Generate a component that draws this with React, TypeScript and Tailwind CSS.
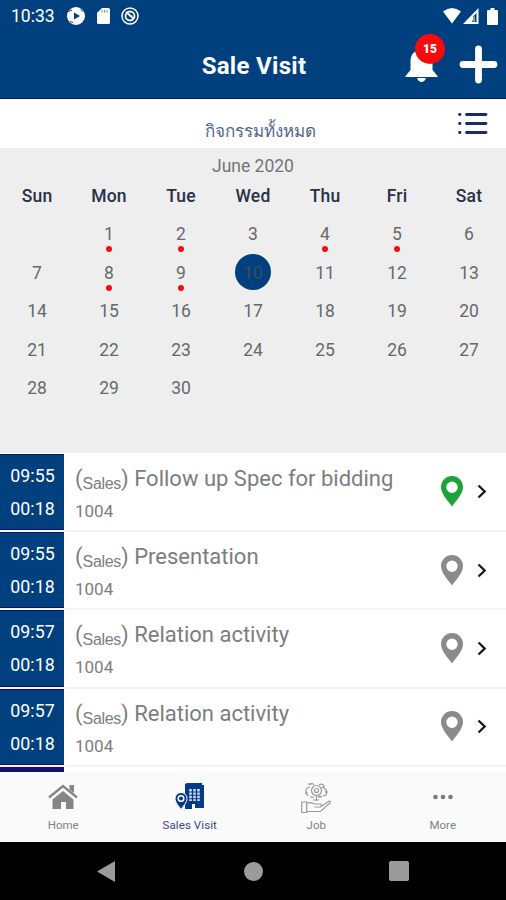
import React from 'react'

const weekdays = ['Sun', 'Mon', 'Tue', 'Wed', 'Thu', 'Fri', 'Sat']
const days = [0, ...Array.from({ length: 30 }, (_, i) => i + 1)]
const marked = [1, 2, 4, 5, 8, 9]
const today = 10

const visits = [
    { start: '09:55', end: '00:18', title: 'Follow up Spec for bidding', code: '1004', checkedIn: true },
    { start: '09:55', end: '00:18', title: 'Presentation', code: '1004', checkedIn: false },
    { start: '09:57', end: '00:18', title: 'Relation activity', code: '1004', checkedIn: false },
    { start: '09:57', end: '00:18', title: 'Relation activity', code: '1004', checkedIn: false },
]

function StatusBar() {
    return (
        <div className="h-8 flex items-center pl-[11px] pr-2 text-white">
            <span className="text-[17.500px] leading-8 w-[55px]">10:33</span>
            <svg className="w-5 h-5" viewBox="0 0 20 20">
                <circle cx="10" cy="10" r="9" fill="currentColor" />
                <path d="M8 6.5 14 10l-6 3.5z" fill="#00407f" />
                <path d="M2.5 5.5 6 4M4 15.500l3 1M15 3.500l1.500 2" stroke="#00407f" strokeWidth="1" />
            </svg>
            <svg className="w-[13px] h-4 ml-[11px]" viewBox="0 0 13 16">
                <path d="M5 0h6.500Q13 0 13 1.500v13q0 1.500-1.500 1.500h-10Q0 16 0 14.500V5z" fill="currentColor" />
                <path d="M5 2v2.500M7.500 2v2.500M10 2v2.500" stroke="#00407f" strokeWidth=".6" />
            </svg>
            <svg className="w-[18px] h-[18px] ml-[11px]" viewBox="0 0 18 18" fill="none" stroke="currentColor">
                <circle cx="9" cy="9" r="8" strokeWidth="1.500" />
                <circle cx="9" cy="9" r="4.500" strokeWidth="1.800" />
                <path d="m5 5 8 7M8 8.500l3 .5" strokeWidth="1.700" />
            </svg>
            <svg className="w-[18px] h-4 ml-auto" viewBox="0 0 18 16">
                <path d="M0 3.500Q9-3.500 18 3.500L9 15.500z" fill="currentColor" />
            </svg>
            <svg className="w-4 h-4 ml-[2px]" viewBox="0 0 16 16">
                <path d="M15.500 0v16H0z" fill="currentColor" />
                <path d="M13.500 5v9H8.500L10 12V8.500z" fill="#00407f" />
                <path d="M11 8.500V14" stroke="white" strokeWidth="1" />
            </svg>
            <svg className="w-[11px] h-[17px] ml-[8px]" viewBox="0 0 11 17">
                <path d="M3.500 0h4v2H10q1 0 1 1v13q0 1-1 1H1q-1 0-1-1V3q0-1 1-1h2.500z" fill="currentColor" />
            </svg>
        </div>
    )
}

function Header() {
    return (
        <header className="h-[99px] bg-[#00407f] border-b border-[#11106b]">
            <StatusBar />
            <div className="relative h-[66px]">
                <h1 className="text-center text-white font-bold text-2xl leading-[68px] tracking-[0.300px] pl-[2px]">Sale Visit</h1>
                <svg className="absolute left-[404px] top-[15px] w-[35px] h-[36px]" viewBox="0 0 34 36" fill="white">
                    <path d="M14 3a3 3 0 0 1 6 0c6 2 8 6 8 12v8l5 6v1H1v-1l5-6v-8C6 9 8 5 14 3zM12.500 31h9q-1.500 4-4.500 4t-4.500-4z" />
                </svg>
                <span className="absolute left-[415px] top-[2px] w-[30px] h-[30px] rounded-full bg-[#f90b0b] text-white text-xs font-black leading-[31px] text-center">15</span>
                <svg className="absolute left-[459px] top-[13px] w-[39px] h-[39px]" viewBox="0 0 39 39" fill="none" stroke="white" strokeWidth="6.800" strokeLinecap="round">
                    <path d="M19.500 4v31M4 19.500h31" />
                </svg>
            </div>
        </header>
    )
}

function Calendar() {
    return (
        <section className="h-[305px] bg-[#eee] px-px">
            <h2 className="h-[36px] text-center text-[17.500px] leading-[37px] text-[#707579]">June 2020</h2>
            <div className="grid grid-cols-7 text-center">
                {weekdays.map((name) => (
                    <div key={name} className="h-[31px] text-[17.500px] leading-[24px] tracking-[0.200px] font-medium text-[#28304a]">{name}</div>
                ))}
                {days.map((day) => (
                    <div key={day} className="relative h-[38.500px] flex justify-center">
                        {day > 0 && (
                            <span className={`w-9 h-9 rounded-full text-[17.500px] leading-[38px] ${day === today ? 'bg-[#00407f] text-[#3d4b60]' : 'text-[#66696d]'}`}>{day}</span>
                        )}
                        {marked.includes(day) && (
                            <span className="absolute left-1/2 -ml-[3px] top-[31px] w-[6px] h-[6px] rounded-full bg-[#fa0a12]" />
                        )}
                    </div>
                ))}
            </div>
        </section>
    )
}

function VisitRow({ visit }: { visit: (typeof visits)[number] }) {
    return (
        <li className="h-[78.300px] flex shrink-0 border-b-2 border-[#f3f3f4]">
            <div className="w-16 bg-[#00407f] border-y border-[#11106b] text-white text-[17.800px] leading-[33px] text-center pt-[4px] pl-px">
                <div>{visit.start}</div>
                <div>{visit.end}</div>
            </div>
            <div className="flex-1 pl-[11px] text-[#7b7d7f] whitespace-nowrap">
                <div className="h-[44px] pt-[8px] text-[22px] leading-[34px] text-[#7b7d7f]">
                    (<span className="relative top-[3px] text-[16px] font-[Liberation_Sans] tracking-[-0.300px]">Sales</span>) {visit.title}
                </div>
                <div className="text-[17px] leading-[26px]">{visit.code}</div>
            </div>
            <div className="w-[65px] flex items-center">
                <svg className={`w-[22px] h-[31px] ${visit.checkedIn ? 'text-[#20a23b]' : 'text-[#8b8b8b]'}`} viewBox="0 0 22 31">
                    <path d="M11 0A11 11 0 0 0 0 11c0 7 7 14 11 19.500C15 25 22 18 22 11A11 11 0 0 0 11 0zm0 5.500a5.700 5.700 0 1 1 0 11.400 5.700 5.700 0 0 1 0-11.400z" fill="currentColor" />
                </svg>
                <svg className="w-[10px] h-[15px] ml-[14px]" viewBox="0 0 10 15" fill="none" stroke="#161616" strokeWidth="2.300">
                    <path d="m1.500 1.500 6.200 6-6.200 6" />
                </svg>
            </div>
        </li>
    )
}

function TabBar() {
    return (
        <nav className="relative h-[70px] grid grid-cols-4 bg-[#fafafa] text-[11.500px] text-[#808284]">
            <div className="flex flex-col items-center">
                <svg className="w-[30px] h-[30px] mt-[11px]" viewBox="0 0 30 30" fill="#858585">
                    <path d="M1 14.500 15 3l14 11.500" fill="none" stroke="#858585" strokeWidth="2.300" />
                    <path d="M21.500 2H26v8l-4.500-3.500zM4.500 16.500 15 8l10.500 8.500V26h-7.500v-7h-5v7H4.500z" />
                </svg>
                <span className="leading-6">Home</span>
            </div>
            <div className="flex flex-col items-center text-[#38478a]">
                <svg className="w-[30px] h-[30px] mt-[11px]" viewBox="0 0 30 30">
                    <path d="M10 1 12 0h15v2h2v23h-9v-4h-3v5h-7z" fill="#073a86" />
                    <path d="M15.500 6v12M19.500 6v12M23.500 6v12" stroke="#d5e2f5" strokeWidth="2.500" strokeDasharray="2.400 1" />
                    <path d="M6 9.500a6 6 0 0 0-6 6c0 4 4 8 6 11 2-3 6-7 6-11a6 6 0 0 0-6-6z" fill="#073a86" stroke="#fafafa" strokeWidth="1" />
                    <circle cx="6" cy="15.500" r="2.800" fill="#073a86" stroke="white" strokeWidth="1.500" />
                </svg>
                <span className="leading-6 tracking-[0.100px]">Sales Visit</span>
            </div>
            <div className="flex flex-col items-center">
                <svg className="w-[30px] h-[30px] mt-[11px]" viewBox="0 0 30 30" fill="none" stroke="#999" strokeWidth="1.200">
                    <path d="M.700 19h5v10.500h-5zM5.500 20q5-1 8 1h6q2 1 0 3h-6M5.500 28.500h14L29 20q1-2-1-2l-7 5" />
                    <circle cx="15.500" cy="7.500" r="5" />
                    <circle cx="15.500" cy="7.500" r="2" />
                    <path d="m10 2-2-1q5-1 5 1M18 2q4-2 5 1l-2 2M9 4q-5 1-4 6l2 3M22 4q5 3 3 8l-3 1M7 10H4M24 9h3M10 13q0 2 3 1M21 13q-2 2-4 0M15.500 13v5M12 17h6" />
                </svg>
                <span className="leading-6">Job</span>
            </div>
            <div className="flex flex-col items-center">
                <svg className="w-[30px] h-[30px] mt-[11px]" viewBox="0 0 30 30" fill="#77797b">
                    <circle cx="7.500" cy="14" r="2.300" />
                    <circle cx="15" cy="14" r="2.300" />
                    <circle cx="22.500" cy="14" r="2.300" />
                </svg>
                <span className="leading-6">More</span>
            </div>
        </nav>
    )
}

export default function App() {
    return (
        <main className="w-[506px] h-[900px] flex flex-col overflow-hidden bg-white font-[Roboto,sans-serif]">
            <Header />
            <div className="relative h-[49px] shrink-0 text-center text-[#52658d] text-[17px] leading-[64px] pl-[15px]">
                กิจกรรมทั้งหมด
                <svg className="absolute right-[18px] top-[12px] w-[31px] h-[25px]" viewBox="0 0 31 25" stroke="#1b2a6b" strokeWidth="2.800" strokeLinecap="round">
                    <path d="M9.500 3.500H29M9.500 12.500H29M9.500 21.500H29M2.500 3.500h.5M2.500 12.500h.5M2.500 21.500h.5" />
                </svg>
            </div>
            <Calendar />
            <ul className="h-[319px] pt-[0.700px] flex flex-col shrink-0 overflow-hidden">
                {visits.map((visit, i) => (
                    <VisitRow key={i} visit={visit} />
                ))}
                <li className="w-16 h-6 bg-[#11106b]" />
            </ul>
            <TabBar />
            <footer className="h-[58px] shrink-0 bg-black flex items-center text-[#9b9b9b]">
                <svg className="w-[18px] h-[21px] ml-[97px]" viewBox="0 0 18 21" fill="currentColor">
                    <path d="M18 0v21L0 10.500z" />
                </svg>
                <span className="w-[19px] h-[19px] rounded-full bg-[#9b9b9b] ml-[129px]" />
                <span className="w-[20px] h-[20px] rounded-[2px] bg-[#9b9b9b] ml-[126px]" />
            </footer>
        </main>
    )
}
